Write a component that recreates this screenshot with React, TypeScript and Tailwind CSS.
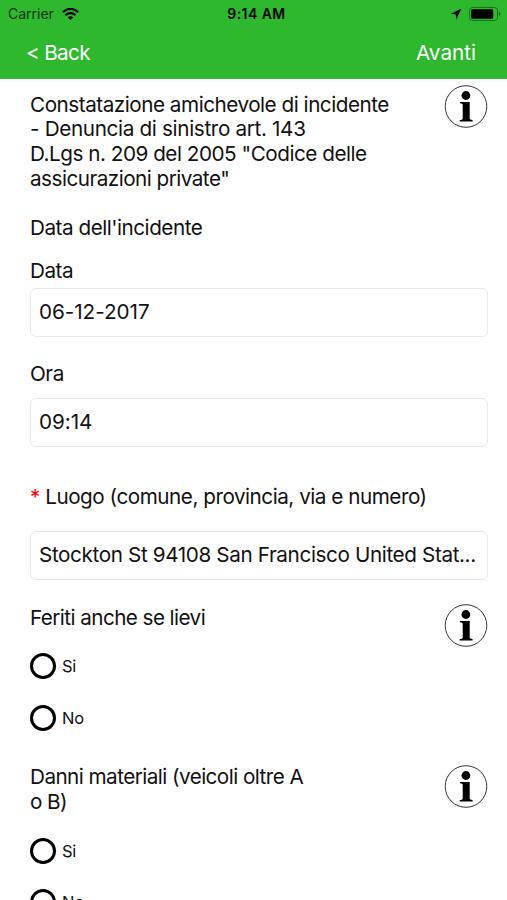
import { useState } from "react";

interface InfoButtonProps {
  label: string;
}

function InfoButton({ label }: InfoButtonProps) {
  return (
    <button type="button" aria-label={label} className="shrink-0">
      <svg width="44" height="43" viewBox="0 0 44 43" className="block">
        <circle cx="22" cy="21.500" r="20.800" fill="#fff" stroke="#333" strokeWidth="1" />
        <circle cx="21.900" cy="10.500" r="4.400" fill="#000" />
        <path
          d="M15.900 16.900H25.700V33.500c0 1 .8 1.300 2.900 1.500V36.400H15.700V35c2.200-.2 3-.6 3-1.600V20c0-1.200-.8-1.600-2.800-1.800z"
          fill="#000"
        />
      </svg>
    </button>
  );
}

interface FieldProps {
  value: string;
  className?: string;
}

function Field({ value, className = "" }: FieldProps) {
  return (
    <div
      className={`h-[49px] flex items-center rounded-md border border-[#e8e8e8] pl-2 whitespace-nowrap ${className}`}
    >
      {value}
    </div>
  );
}

interface YesNoProps {
  name: string;
}

function YesNo({ name }: YesNoProps) {
  const [selected, setSelected] = useState("");

  return (
    <div className="flex flex-col gap-[25.500px]">
      {["Si", "No"].map((option) => (
        <label key={option} className="h-[26px] flex items-center gap-[6px]">
          <input
            type="radio"
            name={name}
            checked={selected === option}
            onChange={() => setSelected(option)}
            className="size-[26px] appearance-none rounded-full border-[3px] border-black checked:bg-gray-500"
          />
          <span className="text-[16.500px] leading-5 tracking-[-0.3px]">{option}</span>
        </label>
      ))}
    </div>
  );
}

export default function App() {
  return (
    <div className="w-[507px] h-[900px] overflow-hidden bg-white text-[#111] font-['Inter',sans-serif]">
      {/* Header */}
      <header className="h-[79px] bg-[#2eb82e]">
        {/* Status bar */}
        <div className="h-[27px] grid grid-cols-3 items-center pl-2 pr-[6px] text-black">
          <div className="flex items-center gap-2">
            <span className="text-[14px] text-[#0a330a]">Carrier</span>
            <svg width="17" height="12" viewBox="0 0 17 12">
              <g fill="none" stroke="#000" strokeWidth="2.200">
                <path d="M.8 4.200C5-.2 12-.2 16.200 4.200" />
                <path d="M3.500 7.200c2.800-2.800 7.200-2.800 10 0" />
              </g>
              <path d="M8.500 12 5.800 9.400c1.500-1.500 3.900-1.500 5.400 0z" fill="#000" />
            </svg>
          </div>
          <span className="pl-1 text-center text-[14px] font-semibold tracking-[0.45px] whitespace-nowrap">
            9:14 AM
          </span>
          <div className="flex items-center justify-end gap-[7px]">
            <svg width="12" height="12" viewBox="0 0 12 12">
              <path d="M11.500 .5 .5 6l5.200.3L6.200 11.500z" fill="#000" />
            </svg>
            <svg width="32" height="14" viewBox="0 0 32 14">
              <rect x=".5" y=".5" width="28" height="13" rx="3" fill="none" stroke="#1c6f1c" />
              <rect x="2.200" y="2.200" width="22" height="9.600" rx="1.300" fill="#000" />
              <path d="M30 4.800c2 .8 2 3.600 0 4.400z" fill="#1c6f1c" />
            </svg>
          </div>
        </div>

        <nav className="h-[51px] flex items-center justify-between pl-[26px] pr-[31px] text-[20.700px] text-white">
          <button type="button" className="tracking-[-0.65px]">
            &lt; Back
          </button>
          <button type="button">Avanti</button>
        </nav>
      </header>

      <main className="pl-[30px] pr-[19px] text-[20.700px] leading-[24.700px] tracking-[-0.48px]">
        <div className="h-[124px] flex items-start justify-between pt-[6px]">
          <h1 className="pt-[7.600px]">
            Constatazione amichevole di incidente
            <br />
            <span className="tracking-[-0.34px]">- Denuncia di sinistro art. 143</span>
            <br />
            D.Lgs n. 209 del 2005 "Codice delle
            <br />
            <span className="tracking-[-0.52px]">assicurazioni private"</span>
          </h1>
          <InfoButton label="Informazioni sulla constatazione" />
        </div>

        <h2 className="mt-[12.500px]">Data dell'incidente</h2>

        <p className="mt-[19px]">Data</p>
        <Field value="06-12-2017" className="mt-[4px] tracking-[-0.05px]" />

        <p className="mt-[25.500px]">Ora</p>
        <Field value="09:14" className="mt-[10.500px] tracking-[-0.05px]" />

        <p className="mt-[38px]">
          <span className="text-[#f00]">*</span> Luogo (comune, provincia, via e numero)
        </p>
        <Field
          value="Stockton St 94108 San Francisco United Stat..."
          className="mt-[22px] tracking-[-0.38px]"
        />

        {/* Injuries */}
        <div className="mt-[24px] h-[49px] flex items-start justify-between tracking-[-0.57px]">
          <p className="pt-[1.500px]">Feriti anche se lievi</p>
          <InfoButton label="Informazioni sui feriti" />
        </div>
        <YesNo name="feriti" />

        {/* Material damage */}
        <div className="mt-[34px] h-[73px] flex items-start justify-between tracking-[-0.55px]">
          <p className="pt-[0.500px]">
            Danni materiali (veicoli oltre A<br />o B)
          </p>
          <InfoButton label="Informazioni sui danni" />
        </div>
        <YesNo name="danni" />
      </main>
    </div>
  );
}
